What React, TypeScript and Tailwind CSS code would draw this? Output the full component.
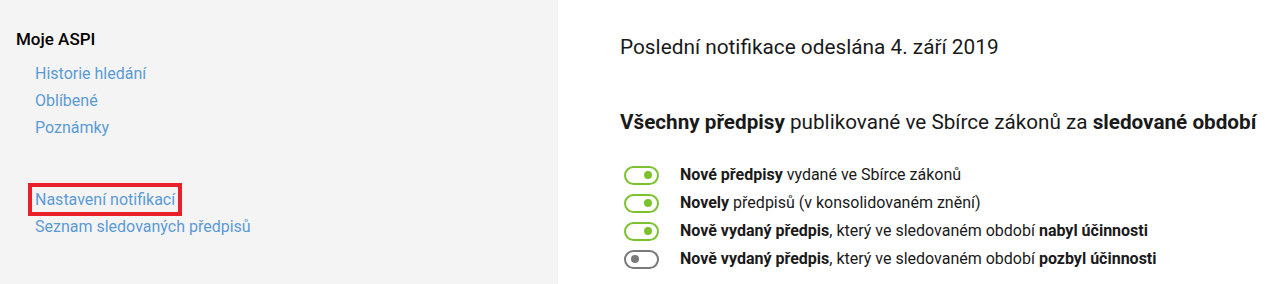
import React from 'react'

const links = ['Historie hledání', 'Oblíbené', 'Poznámky']

const rules = [
    { on: true, bold: 'Nové předpisy', rest: ' vydané ve Sbírce zákonů', tail: '' },
    { on: true, bold: 'Novely', rest: ' předpisů (v konsolidovaném znění)', tail: '' },
    { on: true, bold: 'Nově vydaný předpis', rest: ', který ve sledovaném období ', tail: 'nabyl účinnosti' },
    { on: false, bold: 'Nově vydaný předpis', rest: ', který ve sledovaném období ', tail: 'pozbyl účinnosti' },
]

function Toggle({ on }: { on: boolean }) {
    return (
        <span
            className={
                on
                    ? 'flex h-[19px] w-[35px] shrink-0 items-center justify-end rounded-full border-2 border-[#7cc22e] pr-[5px]'
                    : 'flex h-[19px] w-[35px] shrink-0 items-center justify-start rounded-full border-2 border-[#7a7a7a] pl-[5px]'
            }
        >
            <span className={on ? 'h-[8px] w-[8px] rounded-full bg-[#7cc22e]' : 'h-[8px] w-[8px] rounded-full bg-[#7a7a7a]'} />
        </span>
    )
}

export default function App() {
    return (
        <div className="flex h-[284px] w-full bg-white font-['Roboto',sans-serif]">
            <aside className="w-[558px] shrink-0 bg-[#f4f4f4] pl-4 pt-[28px]">
                <h2 className="text-[17px] font-medium leading-[22px] text-black">Moje ASPI</h2>
                <ul className="mt-[10px] flex flex-col pl-[19px] text-[16px] leading-[27px] text-[#5b9bd5]">
                    {links.map((item) => (
                        <li key={item}>{item}</li>
                    ))}
                </ul>
                <div className="mt-[42px] flex flex-col text-[16px] text-[#5b9bd5]">
                    <span className="ml-[12px] w-fit border-4 border-[#e8202a] px-[3px] leading-[25px]">Nastavení notifikací</span>
                    <span className="pl-[19px] leading-[22px]">Seznam sledovaných předpisů</span>
                </div>
            </aside>
            <main className="flex-1 pl-[62px] pt-[34px] text-[#1a1a1a]">
                <p className="text-[20.8px] leading-[26px]">Poslední notifikace odeslána 4. září 2019</p>
                <p className="mt-[49px] whitespace-nowrap text-[20.7px] leading-[26px]">
                    <b className="font-bold">Všechny předpisy</b> publikované ve Sbírce zákonů za{' '}
                    <b className="font-bold">sledované období</b>
                </p>
                <ul className="mt-[26px] flex flex-col">
                    {rules.map((r, idx) => (
                        <li key={idx} className="flex h-[28px] items-center gap-[21px] pl-[4px] text-[16px] whitespace-nowrap">
                            <Toggle on={r.on} />
                            <span>
                                <b className="font-bold">{r.bold}</b>
                                {r.rest}
                                {r.tail && <b className="font-bold">{r.tail}</b>}
                            </span>
                        </li>
                    ))}
                </ul>
            </main>
        </div>
    )
}
